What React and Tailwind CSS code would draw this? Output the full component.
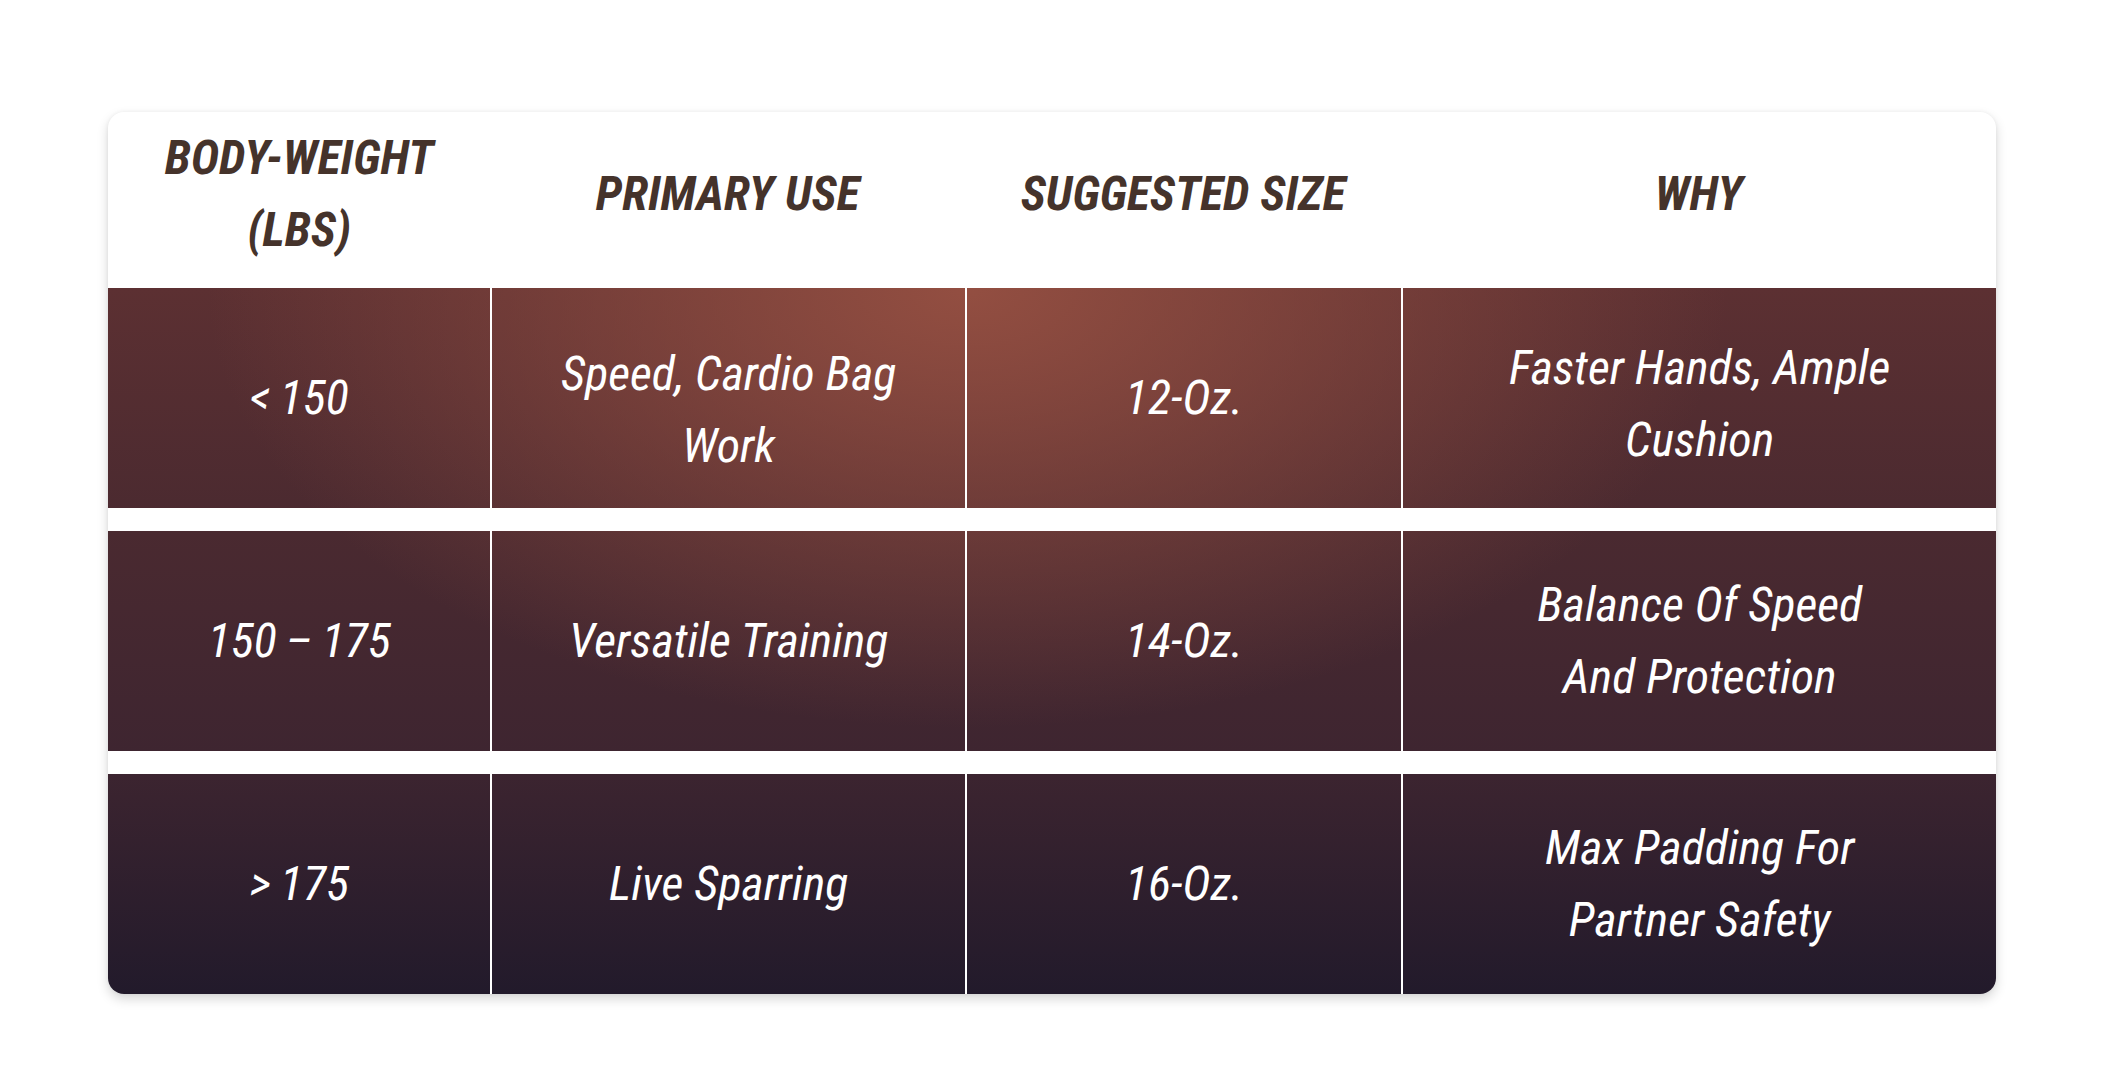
import React from "react";

const rows = [
  [
    { t: "<\u2009150" },
    { t: "Speed, Cardio Bag Work", pad: "pt-[24px]" },
    { t: "12-Oz." },
    { t: "Faster Hands, Ample Cushion", pad: "pt-[12px]" },
  ],
  [
    { t: "150\u2009–\u2009175" },
    { t: "Versatile Training" },
    { t: "14-Oz." },
    { t: "Balance Of Speed And Protection" },
  ],
  [
    { t: ">\u2009175" },
    { t: "Live Sparring" },
    { t: "16-Oz." },
    { t: "Max Padding For Partner Safety" },
  ],
];

const headers = ["Body-Weight (Lbs)", "Primary Use", "Suggested Size", "Why"];

export default function App() {
  return (
    <div className="min-h-screen w-full bg-white pt-[112px] px-[108px] pb-[90px] font-['Roboto_Condensed',Roboto,'Liberation_Sans',sans-serif]">
      <div className="w-full rounded-[16px] bg-white shadow-[0_5px_12px_rgba(0,0,0,0.16),0_0_4px_rgba(0,0,0,0.05)] overflow-hidden">
        <div className="grid grid-cols-[382fr_474fr_436fr_594fr] h-[176px] items-center">
          {headers.map((h, i) => (
            <div key={i} className="flex justify-center px-6 pb-[12px]">
              <div className="max-w-[390px] text-center uppercase italic font-bold text-[48px] leading-[72px] text-[#45332b]">
                {h}
              </div>
            </div>
          ))}
        </div>
        <div className="flex flex-col bg-[radial-gradient(ellipse_760px_440px_at_45.5%_0%,rgba(150,80,66,0.95),rgba(150,80,66,0)),linear-gradient(to_bottom,#5c3032,#4b2a30_32%,#3e2530_66%,#221a2b)]">
          {rows.map((r, ri) => (
            <React.Fragment key={ri}>
              {ri > 0 && <div className="h-[23px] bg-white" />}
              <div className="grid grid-cols-[382fr_474fr_436fr_594fr] h-[220px]">
                {r.map((c, ci) => (
                  <div
                    key={ci}
                    className={`flex items-center justify-center px-6 ${c.pad || ""} ${ci > 0 ? "border-l-2 border-white" : ""}`}
                  >
                    <div className="max-w-[390px] text-center italic text-white text-[48px] leading-[72px]">
                      {c.t}
                    </div>
                  </div>
                ))}
              </div>
            </React.Fragment>
          ))}
        </div>
      </div>
    </div>
  );
}
